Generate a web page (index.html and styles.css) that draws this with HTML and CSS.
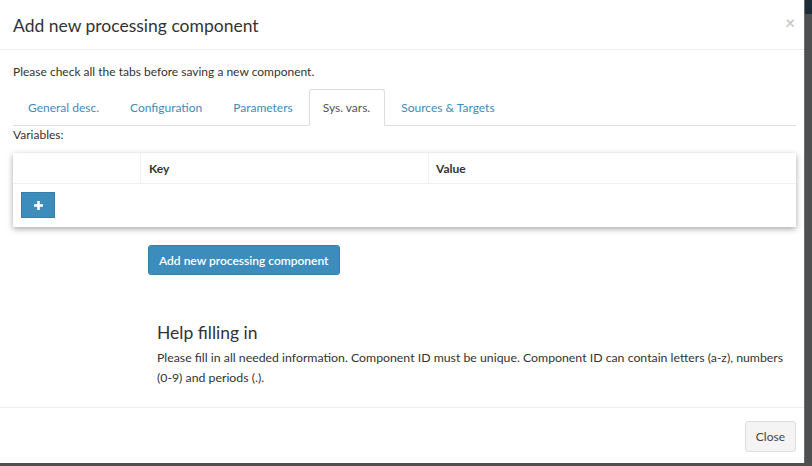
FILE: index.html
```html
<!DOCTYPE html>
<html lang="en">
<head>
<meta charset="utf-8">
<title>Add new processing component</title>
<link rel="stylesheet" href="styles.css">
</head>
<body>
<div class="backdrop">
  <div class="modal">
    <div class="modal-header">
      <h4 class="modal-title">Add new processing component</h4>
      <span class="close">&times;</span>
    </div>
    <div class="modal-body">
      <p class="intro">Please check all the tabs before saving a new component.</p>
      <ul class="tabs">
        <li class="tab"><a>General desc.</a></li>
        <li class="tab"><a>Configuration</a></li>
        <li class="tab"><a>Parameters</a></li>
        <li class="tab active"><a>Sys. vars.</a></li>
        <li class="tab"><a>Sources &amp; Targets</a></li>
      </ul>
      <div class="label">Variables:</div>
      <div class="card">
        <div class="row head">
          <div class="c1"></div>
          <div class="c2">Key</div>
          <div class="c3">Value</div>
        </div>
        <div class="row body-row">
          <button class="btn-plus" type="button"><svg width="9" height="9" viewBox="0 0 9 9"><path d="M3.2 0h2.6v3.2H9v2.6H5.8V9H3.2V5.8H0V3.2h3.2z" fill="#fff"/></svg></button>
        </div>
      </div>
      <div class="actions">
        <button class="btn-primary" type="button">Add new processing component</button>
      </div>
      <div class="help">
        <h4 class="help-title">Help filling in</h4>
        <p class="help-text">Please fill in all needed information. Component ID must be unique. Component ID can contain letters (a-z), numbers (0-9) and periods (.).</p>
      </div>
    </div>
    <div class="modal-footer">
      <button class="btn-default" type="button">Close</button>
    </div>
  </div>
</div>
</body>
</html>
```

FILE: styles.css
```css
* { box-sizing: border-box; }
html, body { margin: 0; padding: 0; }
body {
  width: 812px;
  height: 466px;
  overflow: hidden;
  background: #3a3f44;
  font-family: "Source Sans Pro", Lato, "Noto Sans", sans-serif;
  color: #333;
  font-size: 12px;
}
.backdrop {
  width: 812px;
  height: 466px;
  background: linear-gradient(to bottom, #1d2e3b 0, #1d2e3b 14px, #4d4f51 14px);
}
.modal {
  width: 805px;
  height: 463px;
  background: #fff;
  display: flex;
  flex-direction: column;
  border-right: 1px solid #6b6b6b;
}
.modal-header {
  height: 50px;
  flex: none;
  border-bottom: 1px solid #eee;
  display: flex;
  align-items: center;
  justify-content: space-between;
  padding: 0 9px 0 13px;
}
.modal-title {
  margin: 0;
  font-size: 17.5px;
  font-weight: 400;
  color: #333;
  padding-top: 1px;
}
.close {
  color: #c8c8c8;
  font-size: 17px;
  font-weight: 700;
  line-height: 1;
  margin-top: -4px;
}
.modal-body {
  flex: 1;
  padding: 13px 8px 0 13px;
}
.intro {
  margin: 0 0 8px;
  line-height: 18px;
}
.tabs {
  list-style: none;
  margin: 0;
  padding: 0;
  display: flex;
  border-bottom: 1px solid #ddd;
  height: 37px;
}
.tab {
  margin-right: 1px;
  margin-bottom: -1px;
}
.tab a {
  display: block;
  height: 37px;
  padding: 9px 14px 0 14px;
  line-height: 17px;
  color: #3c8dbc;
  border: 1px solid transparent;
  border-radius: 3px 3px 0 0;
}
.tab.active a {
  color: #555;
  border-color: #ddd #ddd #fff;
  background: #fff;
  padding-left: 13px;
  padding-right: 14px;
}
.label {
  margin-top: 1px;
  line-height: 16px;
}
.card {
  margin-top: 10px;
  width: 783px;
  background: #fff;
  box-shadow: 0 2px 6px rgba(0,0,0,0.35);
}
.row { display: flex; }
.head {
  height: 31px;
  border-bottom: 1px solid #f0f0f0;
  font-weight: 700;
  align-items: stretch;
}
.head > div {
  display: flex;
  align-items: center;
  padding-left: 8px;
}
.c1 { width: 127px; }
.c2 { width: 288px; border-left: 1px solid #f0f0f0; }
.c3 { flex: 1; border-left: 1px solid #f0f0f0; padding-left: 7px !important; }
.body-row {
  height: 43px;
  padding: 8px 0 0 8px;
}
.btn-plus {
  width: 34px;
  height: 26px;
  background: #3c8dbc;
  border: 1px solid #367fa9;
  border-radius: 0;
  display: flex;
  align-items: center;
  justify-content: center;
  padding: 0;
}
.actions {
  margin-top: 18px;
  padding-left: 135px;
}
.btn-primary {
  font-family: inherit;
  height: 30px;
  padding: 0 10px;
  background: #3c8dbc;
  border: 1px solid #367fa9;
  border-radius: 3px;
  color: #fff;
  font-size: 12px;
  font-weight: 600;
}
.help {
  margin-top: 47px;
  padding-left: 144px;
  padding-right: 0;
}
.help-title {
  margin: 0 0 4px;
  font-size: 17.5px;
  font-weight: 400;
  line-height: 22px;
}
.help-text {
  margin: 0;
  font-size: 12.3px;
  line-height: 20px;
}
.modal-footer {
  height: 56px;
  flex: none;
  border-top: 1px solid #eee;
  display: flex;
  justify-content: flex-end;
  align-items: flex-start;
  padding: 13px 8px 0 0;
}
.btn-default {
  font-family: inherit;
  height: 31px;
  padding: 0 10px;
  background: #f4f4f4;
  border: 1px solid #ddd;
  border-radius: 3px;
  color: #444;
  font-size: 12px;
}
```
